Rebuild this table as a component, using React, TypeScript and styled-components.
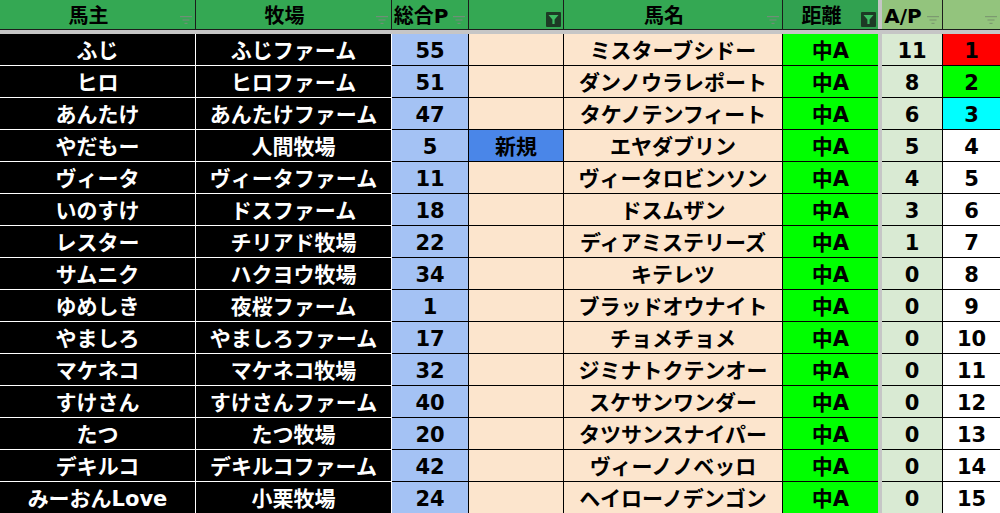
import React from "react";
import styled, { createGlobalStyle } from "styled-components";

const Global = createGlobalStyle`
  html, body { margin: 0; padding: 0; background: #ffffff; }
  body { width: 1000px; height: 513px; overflow: hidden; }
`;

type ColKey = "owner" | "farm" | "points" | "flag" | "horse" | "dist" | "ap" | "rank";

const widths: Record<ColKey, number> = {
  owner: 196,
  farm: 196,
  points: 77,
  flag: 95,
  horse: 219,
  dist: 95,
  ap: 61,
  rank: 57,
};

const Sheet = styled.div`
  width: 1000px;
  height: 513px;
  overflow: hidden;
  display: flex;
  flex-direction: column;
  font-family: "DejaVu Sans", "Noto Sans CJK JP", sans-serif;
  font-weight: 700;
  color: #000;
`;

const HeaderRow = styled.div`
  display: flex;
  height: 30px;
  flex: none;
  box-sizing: border-box;
  border-bottom: 1px solid #1c1c1c;
`;

const FreezeBand = styled.div`
  height: 4px;
  flex: none;
  background: #c6c6c6;
`;

const FreezeCol = styled.div`
  width: 4px;
  flex: none;
  background: #c6c6c6;
`;

const HeadCell = styled.div<{ $w: number; $bg: string; $border?: boolean }>`
  position: relative;
  width: ${(p) => p.$w}px;
  flex: none;
  box-sizing: border-box;
  background: ${(p) => p.$bg};
  border-right: ${(p) => (p.$border ? "1px solid #1c1c1c" : "none")};
  padding-right: 18px;
  display: flex;
  align-items: center;
  justify-content: center;
  font-size: 20px;
  line-height: 1;
  white-space: nowrap;
  overflow: hidden;
`;

const HeadText = styled.span`
  position: relative;
  top: 1px;
`;

const FilterMark = styled.svg`
  position: absolute;
  right: 3px;
  top: 16px;
  width: 12px;
  height: 8px;
`;

const ActiveFilter = styled.div`
  position: absolute;
  right: 2px;
  top: 12px;
  width: 15px;
  height: 15px;
  background: #1d3a25;
  border-radius: 1px;
  display: flex;
  align-items: center;
  justify-content: center;
`;

const Body = styled.div`
  display: flex;
  flex-direction: column;
`;

const Row = styled.div`
  display: flex;
  height: 32px;
  flex: none;
`;

const Cell = styled.div<{ $w: number; $bg: string; $fg?: string; $line: string; $right?: boolean }>`
  width: ${(p) => p.$w}px;
  flex: none;
  box-sizing: border-box;
  background: ${(p) => p.$bg};
  color: ${(p) => p.$fg || "#000"};
  border-bottom: 1px solid ${(p) => p.$line};
  border-right: ${(p) => (p.$right ? `1px solid ${p.$line}` : "none")};
  display: flex;
  align-items: center;
  justify-content: center;
  font-size: 21px;
  line-height: 1;
  white-space: nowrap;
  overflow: hidden;
`;

const CellText = styled.span`
  position: relative;
  top: 2px;
`;

const GREEN = "#34a853";
const LIGHT_GREEN = "#93c47d";

const rows: [string, string, number, string, string, string, number, number][] = [
  ["ふじ", "ふじファーム", 55, "", "ミスターブシドー", "中A", 11, 1],
  ["ヒロ", "ヒロファーム", 51, "", "ダンノウラレポート", "中A", 8, 2],
  ["あんたけ", "あんたけファーム", 47, "", "タケノテンフィート", "中A", 6, 3],
  ["やだもー", "人間牧場", 5, "新規", "エヤダブリン", "中A", 5, 4],
  ["ヴィータ", "ヴィータファーム", 11, "", "ヴィータロビンソン", "中A", 4, 5],
  ["いのすけ", "ドスファーム", 18, "", "ドスムザン", "中A", 3, 6],
  ["レスター", "チリアド牧場", 22, "", "ディアミステリーズ", "中A", 1, 7],
  ["サムニク", "ハクヨウ牧場", 34, "", "キテレツ", "中A", 0, 8],
  ["ゆめしき", "夜桜ファーム", 1, "", "ブラッドオウナイト", "中A", 0, 9],
  ["やましろ", "やましろファーム", 17, "", "チョメチョメ", "中A", 0, 10],
  ["マケネコ", "マケネコ牧場", 32, "", "ジミナトクテンオー", "中A", 0, 11],
  ["すけさん", "すけさんファーム", 40, "", "スケサンワンダー", "中A", 0, 12],
  ["たつ", "たつ牧場", 20, "", "タツサンスナイパー", "中A", 0, 13],
  ["デキルコ", "デキルコファーム", 42, "", "ヴィーノノベッロ", "中A", 0, 14],
  ["みーおんLove", "小栗牧場", 24, "", "ヘイローノデンゴン", "中A", 0, 15],
];

const rankColor = (r: number) => (r === 1 ? "#ff0000" : r === 2 ? "#00ff00" : r === 3 ? "#00ffff" : "#ffffff");

const Filter = ({ color }: { color: string }) => (
  <FilterMark viewBox="0 0 12 8">
    <rect x="0" y="0" width="12" height="1.2" fill={color} />
    <rect x="2.5" y="3.4" width="7" height="1.2" fill={color} />
    <rect x="4.5" y="6.8" width="3" height="1.2" fill={color} />
  </FilterMark>
);

const Active = () => (
  <ActiveFilter>
    <svg width="11" height="11" viewBox="0 0 11 11">
      <path d="M0.5 1 H10.5 L6.6 5.4 V10 H4.4 V5.4 Z" fill="#3dbb62" />
    </svg>
  </ActiveFilter>
);

type HeadDef = { key: ColKey; label: string; bg: string; active?: boolean; border?: boolean; icon: string };

const heads: HeadDef[] = [
  { key: "owner", label: "馬主", bg: GREEN, border: true, icon: "#6f8f77" },
  { key: "farm", label: "牧場", bg: GREEN, border: true, icon: "#6f8f77" },
  { key: "points", label: "総合P", bg: GREEN, border: true, icon: "#6f8f77" },
  { key: "flag", label: "", bg: GREEN, border: true, active: true, icon: "" },
  { key: "horse", label: "馬名", bg: GREEN, border: true, icon: "#6f8f77" },
  { key: "dist", label: "距離", bg: "#31a150", active: true, icon: "" },
];

const tailHeads: HeadDef[] = [
  { key: "ap", label: "A/P", bg: LIGHT_GREEN, border: true, icon: "#7c9a70" },
  { key: "rank", label: "", bg: LIGHT_GREEN, icon: "#7c9a70" },
];

const renderHead = (h: HeadDef) => (
  <HeadCell key={h.key} $w={widths[h.key]} $bg={h.bg} $border={h.border}>
    <HeadText>{h.label}</HeadText>
    {h.active ? <Active /> : <Filter color={h.icon} />}
  </HeadCell>
);

export default function App() {
  return (
    <>
      <Global />
      <Sheet>
        <HeaderRow>
          {heads.map(renderHead)}
          <FreezeCol />
          {tailHeads.map(renderHead)}
        </HeaderRow>
        <FreezeBand />
        <Body>
          {rows.map((r, i) => (
            <Row key={i}>
              <Cell $w={widths.owner} $bg="#000" $fg="#fff" $line="#ffffff" $right>
                <CellText>{r[0]}</CellText>
              </Cell>
              <Cell $w={widths.farm} $bg="#000" $fg="#fff" $line="#ffffff" $right>
                <CellText>{r[1]}</CellText>
              </Cell>
              <Cell $w={widths.points} $bg="#a4c2f4" $line="#000" $right>
                <CellText>{r[2]}</CellText>
              </Cell>
              <Cell $w={widths.flag} $bg={r[3] ? "#4a86e8" : "#fce5cd"} $line="#000" $right>
                <CellText>{r[3]}</CellText>
              </Cell>
              <Cell $w={widths.horse} $bg="#fce5cd" $line="#000" $right>
                <CellText>{r[4]}</CellText>
              </Cell>
              <Cell $w={widths.dist} $bg="#00ff00" $line="#000">
                <CellText>{r[5]}</CellText>
              </Cell>
              <FreezeCol />
              <Cell $w={widths.ap} $bg="#d9ead3" $line="#000" $right>
                <CellText>{r[6]}</CellText>
              </Cell>
              <Cell $w={widths.rank} $bg={rankColor(r[7])} $line="#000">
                <CellText>{r[7]}</CellText>
              </Cell>
            </Row>
          ))}
        </Body>
      </Sheet>
    </>
  );
}
